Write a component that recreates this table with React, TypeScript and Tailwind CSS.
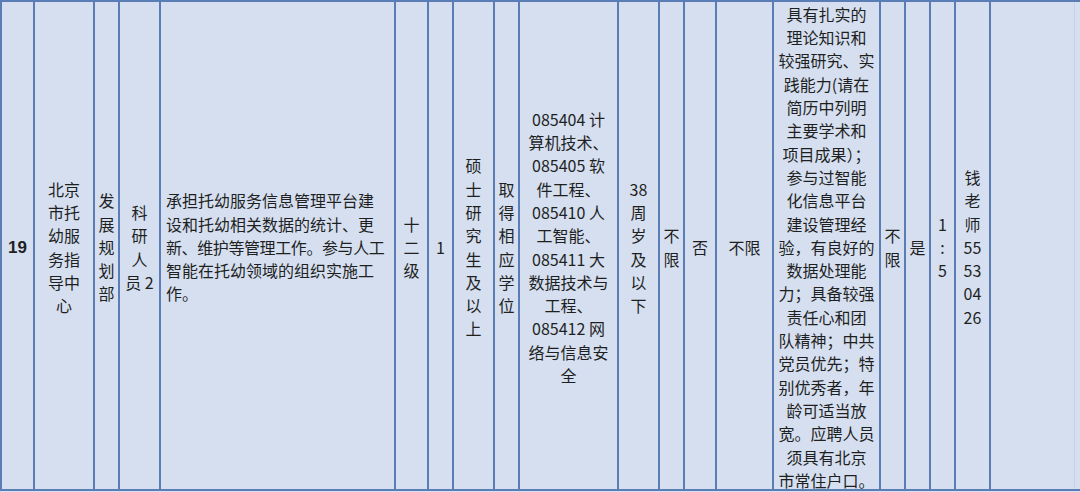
import React from "react";

type Col = { w: string; lines: string[]; cls?: string };

const cols: Col[] = [
  { w: "w-[33px]", lines: ["19"], cls: "font-bold text-[17px] [font-family:'Liberation_Sans',sans-serif]" },
  { w: "w-[60px]", lines: ["北京", "市托", "幼服", "务指", "导中", "心"] },
  { w: "w-[25px]", lines: ["发", "展", "规", "划", "部"] },
  { w: "w-[41px]", lines: ["科", "研", "人", "员 2"] },
  {
    w: "w-[235px]",
    lines: [
      "承担托幼服务信息管理平台建",
      "设和托幼相关数据的统计、更",
      "新、维护等管理工作。参与人工",
      "智能在托幼领域的组织实施工",
      "作。",
    ],
    cls: "!justify-start !text-left pl-[5px]",
  },
  { w: "w-[33px]", lines: ["十", "二", "级"] },
  { w: "w-[25px]", lines: ["1"] },
  { w: "w-[41px]", lines: ["硕", "士", "研", "究", "生", "及", "以", "上"] },
  { w: "w-[25px]", lines: ["取", "得", "相", "应", "学", "位"] },
  {
    w: "w-[99px]",
    lines: [
      "085404 计",
      "算机技术、",
      "085405 软",
      "件工程、",
      "085410 人",
      "工智能、",
      "085411 大",
      "数据技术与",
      "工程、",
      "085412 网",
      "络与信息安",
      "全",
    ],
  },
  { w: "w-[41px]", lines: ["38", "周", "岁", "及", "以", "下"] },
  { w: "w-[25px]", lines: ["不", "限"] },
  { w: "w-[32px]", lines: ["否"] },
  { w: "w-[57px]", lines: ["不限"] },
  {
    w: "w-[107px]",
    lines: [
      "具有扎实的",
      "理论知识和",
      "较强研究、实",
      "践能力(请在",
      "简历中列明",
      "主要学术和",
      "项目成果）；",
      "参与过智能",
      "化信息平台",
      "建设管理经",
      "验，有良好的",
      "数据处理能",
      "力；具备较强",
      "责任心和团",
      "队精神；中共",
      "党员优先；特",
      "别优秀者，年",
      "龄可适当放",
      "宽。应聘人员",
      "须具有北京",
      "市常住户口。",
    ],
  },
  { w: "w-[25px]", lines: ["不", "限"] },
  { w: "w-[25px]", lines: ["是"] },
  { w: "w-[25px]", lines: ["1", ":", "5"] },
  { w: "w-[35px]", lines: ["钱", "老", "师", "55", "53", "04", "26"] },
];

export default function App() {
  return (
    <div className="w-[1080px] h-[492px] bg-[#d5dff0] overflow-hidden">
      <div className="flex h-[491px] border-t-2 border-b-2 border-[#5b7db5] text-[16px] leading-[23.3px] text-[#1f1f1f] [font-family:'Noto_Sans_CJK_SC','Noto_Sans',sans-serif]">
        {cols.map((c, i) => (
          <div
            key={i}
            className={`${c.w} shrink-0 border-l-2 border-[#5b7db5] flex items-center justify-center text-center pt-[4px] ${c.cls ?? ""}`}
          >
            <div className="whitespace-nowrap">
              {c.lines.map((l, j) => (
                <div key={j} className={i === 4 && j === 2 ? "tracking-[-0.4px]" : ""}>
                  {l}
                </div>
              ))}
            </div>
          </div>
        ))}
        <div className="flex-1 border-l-2 border-[#5b7db5] flex justify-end">
          <div className="w-[6px] border-l border-[#c3d2ea]" />
        </div>
      </div>
    </div>
  );
}
